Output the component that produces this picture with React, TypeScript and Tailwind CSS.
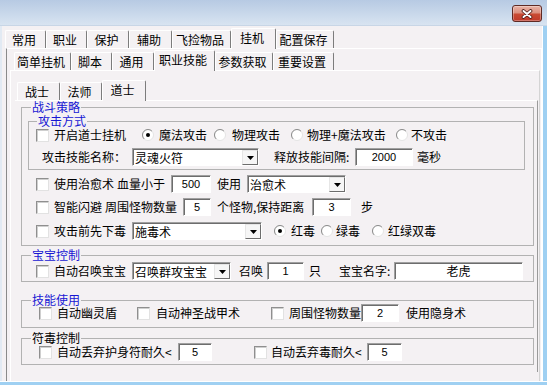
import type { ReactNode } from "react"

const Check = ({ className = "" }: { className?: string }) => (
  <span
    className={`block w-[13px] h-[13px] shrink-0 bg-white border border-[#8f8f8f] border-r-[#e2e2e2] border-b-[#e2e2e2] shadow-[inset_1px_1px_0_#cfcfcf] ${className}`}
  />
)

const Radio = ({ on = false, className = "" }: { on?: boolean; className?: string }) => (
  <svg width="12" height="12" viewBox="0 0 12 12" className={`shrink-0 ${className}`}>
    <circle cx="6" cy="6" r="5.5" fill="#fff" stroke="#e4e4e4" />
    <path d="M9.9 2.1A5.5 5.5 0 0 0 2.1 9.9" fill="none" stroke="#8c8c8c" />
    {on && <circle cx="6" cy="6" r="2" fill="#000" />}
  </svg>
)

const L = ({ className = "", children }: { className?: string; children: ReactNode }) => (
  <span className={`shrink-0 whitespace-nowrap ${className}`}>{children}</span>
)

const Field = ({ className = "", children, num = true }: { className?: string; children: ReactNode; num?: boolean }) => (
  <div
    className={`h-[18px] shrink-0 bg-white flex items-center justify-center border border-[#a0a0a0] border-r-white border-b-white shadow-[inset_1px_1px_0_#6d6d6d] ${className}`}
  >
    <span className={num ? "font-['Liberation_Sans',sans-serif] text-[11px]" : ""}>{children}</span>
  </div>
)

const Combo = ({ className = "", value }: { className?: string; value: string }) => (
  <div
    className={`h-[18px] shrink-0 bg-white flex items-stretch border border-[#a0a0a0] border-r-white border-b-white shadow-[inset_1px_1px_0_#6d6d6d] pt-[1px] pl-[2px] ${className}`}
  >
    <span className="flex-1 flex items-center whitespace-nowrap overflow-hidden">{value}</span>
    <span className="w-[16px] shrink-0 flex items-center justify-center bg-[#f6f6f6] border border-[#e6e6e6] border-r-[#6d6d6d] border-b-[#6d6d6d]">
      <svg width="7" height="4" viewBox="0 0 7 4">
        <path d="M0 0h7L3.5 4z" fill="#000" />
      </svg>
    </span>
  </div>
)

const Group = ({
  title,
  blue = true,
  sub = false,
  className = "",
  children,
}: {
  title: string
  blue?: boolean
  sub?: boolean
  className?: string
  children: ReactNode
}) => (
  <fieldset className={`border border-[#b2b2b2] ${className}`}>
    <legend
      className={`${sub ? "ml-[8px]" : "ml-[9px]"} px-[1px] leading-[12px] ${blue ? "text-[#1717d4]" : "text-black"}`}
    >
      {title}
    </legend>
    {children}
  </fieldset>
)

const Tab = ({ label, w, active = false }: { label: string; w: string; active?: boolean }) => (
  <div
    className={`${w} shrink-0 flex items-center justify-center pr-[3px] whitespace-nowrap border-t border-l border-r border-t-white border-l-white border-r-[#7c7c7c] rounded-t-[2px] ${
      active ? "h-[21px] -mb-px relative z-10 bg-[#f4f1f3] pb-[2px]" : "h-[18px]"
    }`}
  >
    {label}
  </div>
)

const rowA = [
  { label: "常用", w: "w-[41px]" },
  { label: "职业", w: "w-[41px]" },
  { label: "保护", w: "w-[42px]" },
  { label: "辅助", w: "w-[43px]" },
  { label: "飞捡物品", w: "w-[59px]" },
  { label: "挂机", w: "w-[45px]", active: true },
  { label: "配置保存", w: "w-[58px]" },
]

const rowB = [
  { label: "简单挂机", w: "w-[57px]" },
  { label: "脚本", w: "w-[41px]" },
  { label: "通用", w: "w-[42px]" },
  { label: "职业技能", w: "w-[61px]", active: true },
  { label: "参数获取", w: "w-[58px]" },
  { label: "重要设置", w: "w-[61px]" },
]

const rowC = [
  { label: "战士", w: "w-[43px]" },
  { label: "法师", w: "w-[42px]" },
  { label: "道士", w: "w-[44px]", active: true },
]

export default function App() {
  return (
    <div className="w-[547px] h-[385px] overflow-hidden flex flex-col bg-[#f4f1f3] text-[12px] leading-[14px] text-black font-['Noto_Sans_CJK_SC',sans-serif]">
      {/* title bar */}
      <div className="h-[26px] shrink-0 flex justify-end pt-[5px] pr-[5px] bg-linear-to-b from-[#b7cae3] to-[#d8e4f1] border-b border-[#c8d6e6]">
        <div className="w-[30px] h-[17px] rounded-[3px] border border-[#5f2a24] bg-[linear-gradient(#e9b3a6,#dc8f7e_45%,#c94a33_55%,#c0392a)] flex items-center justify-center shadow-[inset_0_0_0_1px_rgba(255,255,255,0.3)]">
          <svg width="12" height="10" viewBox="0 0 12 10">
            <path d="M2.5 2L9.5 8M9.5 2L2.5 8" stroke="#4a1a14" strokeWidth="3.6" strokeLinecap="round" />
            <path d="M2.5 2L9.5 8M9.5 2L2.5 8" stroke="#fff" strokeWidth="2" strokeLinecap="round" />
          </svg>
        </div>
      </div>

      <div className="flex-1 min-h-0 flex">
        <div className="w-[2px] shrink-0 bg-[#e2eaf3]" />

        <div className="flex-1 min-w-0 flex flex-col">
          {/* top tabs */}
          <div className="flex items-end h-[20px] mt-[2px] ml-[3px]">
            {rowA.map((t) => (
              <Tab key={t.label} {...t} />
            ))}
          </div>

          <div className="flex-1 min-h-0 ml-[4px] flex flex-col border-t border-l border-r border-t-white border-l-[#8a8a8a] border-r-white">
            {/* second tabs */}
            <div className="flex items-end h-[20px] mt-[1px] pl-[7px]">
              {rowB.map((t) => (
                <Tab key={t.label} {...t} />
              ))}
            </div>

            <div className="flex-1 min-h-0 ml-[3px] mr-[1px] flex flex-col border-t border-l border-r border-t-white border-l-white border-r-[#d4d4d4]">
              {/* third tabs */}
              <div className="flex items-end h-[20px] mt-[9px] pl-[6px]">
                {rowC.map((t) => (
                  <Tab key={t.label} {...t} />
                ))}
              </div>

              <div className="ml-[4px] mr-[1px] border-t border-r border-t-white border-r-[#9a9a9a] pl-[6px] pr-[3px] pb-[7px]">
                <Group title="战斗策略" className="pb-[5px]">
                  <Group title="攻击方式" sub className="mt-[2px] ml-[6px] mr-[8px] pb-[3px]">
                    <div className="flex items-center h-[16px] pl-[7px]">
                      <Check />
                      <L className="ml-[5px] w-[88px]">开启道士挂机</L>
                      <Radio on />
                      <L className="ml-[5px] w-[55px]">魔法攻击</L>
                      <Radio />
                      <L className="ml-[6px] w-[59px]">物理攻击</L>
                      <Radio />
                      <L className="ml-[4px] w-[89px]">物理+魔法攻击</L>
                      <Radio />
                      <L className="ml-[3px]">不攻击</L>
                    </div>
                    <div className="flex items-center h-[18px] mt-[5px] pl-[13px]">
                      <L className="w-[90px]">攻击技能名称：</L>
                      <Combo className="w-[127px]" value="灵魂火符" />
                      <L className="ml-[15px] w-[81px]">释放技能间隔:</L>
                      <Field className="w-[58px]">2000</Field>
                      <L className="ml-[4px]">毫秒</L>
                    </div>
                  </Group>

                  <div className="flex items-center h-[18px] mt-[5px] pl-[14px]">
                    <Check />
                    <L className="ml-[5px] w-[63px]">使用治愈术</L>
                    <L className="w-[54px]">血量小于</L>
                    <Field className="w-[40px]">500</Field>
                    <L className="ml-[6px] w-[30px]">使用</L>
                    <Combo className="w-[99px]" value="治愈术" />
                  </div>

                  <div className="flex items-center h-[18px] mt-[5px] pl-[14px]">
                    <Check />
                    <L className="ml-[5px] w-[51px]">智能闪避</L>
                    <L className="w-[78px]">周围怪物数量</L>
                    <Field className="w-[28px]">5</Field>
                    <L className="ml-[6px] w-[95px]">个怪物,保持距离</L>
                    <Field className="w-[39px]">3</Field>
                    <L className="ml-[10px]">步</L>
                  </div>

                  <div className="flex items-center h-[18px] mt-[6px] pl-[14px]">
                    <Check />
                    <L className="ml-[5px] w-[78px]">攻击前先下毒</L>
                    <Combo className="w-[130px]" value="施毒术" />
                    <Radio on className="ml-[12px]" />
                    <L className="ml-[5px] w-[30px]">红毒</L>
                    <Radio />
                    <L className="ml-[3px] w-[36px]">绿毒</L>
                    <Radio />
                    <L className="ml-[4px]">红绿双毒</L>
                  </div>
                </Group>

                <Group title="宝宝控制" className="mt-[3px] pb-[1px]">
                  <div className="flex items-center h-[18px] mt-[1px] pl-[14px]">
                    <Check />
                    <L className="ml-[5px] w-[78px]">自动召唤宝宝</L>
                    <Combo className="w-[99px]" value="召唤群攻宝宝" />
                    <L className="ml-[8px] w-[28px]">召唤</L>
                    <Field className="w-[37px]">1</Field>
                    <L className="ml-[5px] w-[30px]">只</L>
                    <L className="w-[55px]">宝宝名字:</L>
                    <Field className="w-[129px]" num={false}>
                      老虎
                    </Field>
                  </div>
                </Group>

                <Group title="技能使用" className="mt-[12px] pb-[5px]">
                  <div className="flex items-center h-[18px] -mt-[2px] pl-[17px]">
                    <Check />
                    <L className="ml-[5px] w-[80px]">自动幽灵盾</L>
                    <Check />
                    <L className="ml-[6px] w-[115px]">自动神圣战甲术</L>
                    <Check />
                    <L className="ml-[5px] w-[72px]">周围怪物数量</L>
                    <Field className="w-[38px]">2</Field>
                    <L className="ml-[7px]">使用隐身术</L>
                  </div>
                </Group>

                <Group title="符毒控制" blue={false} className="mt-[4px] pb-[3px]">
                  <div className="flex items-center h-[18px] -mt-[1px] pl-[17px]">
                    <Check />
                    <L className="ml-[5px] w-[121px]">自动丢弃护身符耐久&lt;</L>
                    <Field className="w-[34px]">5</Field>
                    <Check className="ml-[42px]" />
                    <L className="ml-[4px] w-[96px]">自动丢弃毒耐久&lt;</L>
                    <Field className="w-[35px]">5</Field>
                  </div>
                </Group>
              </div>
            </div>
          </div>
        </div>

        <div className="w-[5px] shrink-0 bg-[#9fd0f2] border-l border-white" />
      </div>
      <div className="h-[4px] shrink-0 bg-[#9fd0f2] border-t border-white" />
    </div>
  )
}
